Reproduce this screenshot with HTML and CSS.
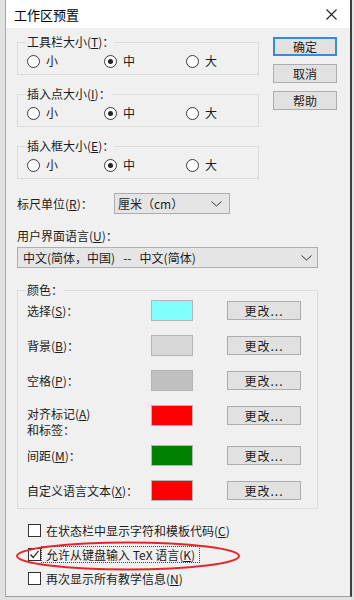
FILE: index.html
```html
<!DOCTYPE html>
<html lang="zh-CN">
<head>
  <meta charset="UTF-8">
  <meta name="viewport" content="width=device-width, initial-scale=1.0">
  <title>工作区预置</title>
  <link rel="stylesheet" href="styles.css">
</head>
<body>
  <div class="desk">
    <div class="dialog">
      <div class="titlebar">
        <span class="title">工作区预置</span>
        <svg class="close" width="11" height="11" viewBox="0 0 11 11">
          <path d="M0.5 0.5 L10.5 10.5 M10.5 0.5 L0.5 10.5" stroke="#222" stroke-width="1.1" fill="none"/>
        </svg>
      </div>

      <div class="content">
        <div class="top">
          <div class="groups">
            <fieldset class="group">
              <legend>工具栏大小(<u>T</u>)：</legend>
              <div class="radios">
                <label class="radio"><span class="dot"></span>小</label>
                <label class="radio"><span class="dot on"></span>中</label>
                <label class="radio"><span class="dot"></span>大</label>
              </div>
            </fieldset>
            <fieldset class="group">
              <legend>插入点大小(<u>I</u>)：</legend>
              <div class="radios">
                <label class="radio"><span class="dot"></span>小</label>
                <label class="radio"><span class="dot on"></span>中</label>
                <label class="radio"><span class="dot"></span>大</label>
              </div>
            </fieldset>
            <fieldset class="group">
              <legend>插入框大小(<u>E</u>)：</legend>
              <div class="radios">
                <label class="radio"><span class="dot"></span>小</label>
                <label class="radio"><span class="dot on"></span>中</label>
                <label class="radio"><span class="dot"></span>大</label>
              </div>
            </fieldset>
          </div>
          <div class="buttons">
            <div class="btn default">确定</div>
            <div class="btn">取消</div>
            <div class="btn">帮助</div>
          </div>
        </div>

        <div class="unit-row">
          <span class="unit-label">标尺单位(<u>R</u>)：</span>
          <div class="combo">
            <span>厘米（cm）</span>
            <svg width="11" height="6" viewBox="0 0 11 6"><path d="M0.5 0.5 L5.5 5 L10.5 0.5" stroke="#333" fill="none"/></svg>
          </div>
        </div>

        <div class="field-label">用户界面语言(<u>U</u>)：</div>
        <div class="combo wide">
          <span class="pre">中文(简体，中国)   --   中文(简体)</span>
          <svg width="11" height="6" viewBox="0 0 11 6"><path d="M0.5 0.5 L5.5 5 L10.5 0.5" stroke="#333" fill="none"/></svg>
        </div>

        <fieldset class="colors">
          <legend>颜色：</legend>
          <div class="color-rows">
            <div class="color-row">
              <span class="color-label">选择(<u>S</u>)：</span>
              <span class="swatch cyan"></span>
              <div class="btn change">更改...</div>
            </div>
            <div class="color-row">
              <span class="color-label">背景(<u>B</u>)：</span>
              <span class="swatch light"></span>
              <div class="btn change">更改...</div>
            </div>
            <div class="color-row">
              <span class="color-label">空格(<u>P</u>)：</span>
              <span class="swatch grey"></span>
              <div class="btn change">更改...</div>
            </div>
            <div class="color-row tall">
              <span class="color-label two-line">对齐标记(<u>A</u>)<br>和标签：</span>
              <span class="swatch red"></span>
              <div class="btn change">更改...</div>
            </div>
            <div class="color-row">
              <span class="color-label">间距(<u>M</u>)：</span>
              <span class="swatch green"></span>
              <div class="btn change">更改...</div>
            </div>
            <div class="color-row">
              <span class="color-label">自定义语言文本(<u>X</u>)：</span>
              <span class="swatch red"></span>
              <div class="btn change">更改...</div>
            </div>
          </div>
        </fieldset>

        <div class="checks">
          <div class="check-row">
            <span class="box"></span>
            <span class="check-text">在状态栏中显示字符和模板代码(<u>C</u>)</span>
          </div>
          <div class="check-row">
            <span class="box">
              <svg width="11" height="11" viewBox="0 0 11 11"><path d="M1.5 5.5 L4.2 8.5 L9.5 1.8" stroke="#222" stroke-width="1.2" fill="none"/></svg>
            </span>
            <span class="check-text focused">允许从键盘输入 TeX 语言(<u>K</u>)</span>
          </div>
          <div class="check-row">
            <span class="box"></span>
            <span class="check-text">再次显示所有教学信息(<u>N</u>)</span>
          </div>
        </div>
      </div>

      <!-- hand-drawn annotation -->
      <svg class="mark" width="228" height="32" viewBox="0 0 228 32">
        <ellipse cx="114" cy="16" rx="111" ry="13.5" stroke="#e3262b" stroke-width="2" fill="none"/>
      </svg>
    </div>
  </div>
</body>
</html>
```

FILE: styles.css
```css
body {
  margin: 0;
  background: #e2e2e2;
  font-family: 'Noto Sans CJK SC', 'Noto Sans', sans-serif;
  font-size: 12px;
  color: #1c1c1c;
}
.desk {
  height: 600px;
  display: flex;
}
.dialog {
  position: relative;
  margin-left: 5px;
  width: 344px;
  height: 596px;
  border-left: 1px solid #a8a8a8;
  border-right: 2px solid #3e3e3e;
  border-bottom: 1px solid #9c9c9c;
  background: #f0f0f0;
  display: flex;
  flex-direction: column;
}
.titlebar {
  height: 28px;
  flex-shrink: 0;
  background: #fff;
  display: flex;
  align-items: center;
  justify-content: space-between;
  padding: 0 13px 0 8px;
}
.title {
  font-size: 13px;
  color: #000;
}
.content {
  padding: 7px 13px 0 11px;
  display: flex;
  flex-direction: column;
}
.top {
  display: flex;
  gap: 14px;
}
.groups {
  width: 242px;
  display: flex;
  flex-direction: column;
  gap: 12px;
}
fieldset {
  margin: 0;
  min-width: 0;
  border: 1px solid #dcdcdc;
}
legend {
  margin-left: -1px;
  padding: 0 1px;
  line-height: 14px;
}
.group {
  padding: 5px 0 6px 9px;
}
.radios {
  display: grid;
  grid-template-columns: 77px 82px auto;
  height: 14px;
  align-items: center;
}
.radio {
  display: flex;
  align-items: center;
  gap: 6px;
  line-height: 14px;
}
.dot {
  width: 13px;
  height: 13px;
  box-sizing: border-box;
  border: 1px solid #3a3a3a;
  border-radius: 50%;
  background: #fff;
  display: flex;
  align-items: center;
  justify-content: center;
}
.dot.on::after {
  content: "";
  width: 5px;
  height: 5px;
  border-radius: 50%;
  background: #222;
}
.buttons {
  width: 64px;
  padding-top: 2px;
  display: flex;
  flex-direction: column;
  gap: 8px;
}
.btn {
  height: 19px;
  box-sizing: border-box;
  border: 1px solid #adadad;
  background: #e1e1e1;
  display: flex;
  align-items: center;
  justify-content: center;
  line-height: 1;
}
.btn.default {
  border: 2px solid #3a8ad8;
}
.unit-row {
  display: flex;
  align-items: center;
  margin-top: 14px;
}
.unit-label {
  width: 97px;
}
.combo {
  width: 116px;
  height: 21px;
  box-sizing: border-box;
  border: 1px solid #adadad;
  background: #e5e5e5;
  display: flex;
  align-items: center;
  justify-content: space-between;
  padding: 0 7px 0 3px;
}
.combo.wide {
  width: 301px;
  margin-top: 4px;
  padding: 0 5px 0 5px;
}
.pre {
  white-space: pre;
}
.field-label {
  margin-top: 15px;
  line-height: 14px;
}
.colors {
  width: 301px;
  box-sizing: border-box;
  margin-top: 15px;
  padding: 3px 0 7px 9px;
}
.color-rows {
  display: flex;
  flex-direction: column;
  gap: 14px;
}
.color-row {
  display: grid;
  grid-template-columns: 124px 76px 74px;
  align-items: start;
  height: 21px;
}
.color-row.tall {
  height: 26px;
}
.color-label {
  margin-top: 4px;
  line-height: 13px;
  white-space: nowrap;
}
.color-label.two-line {
  margin-top: 1px;
  line-height: 16px;
}
.swatch {
  width: 42px;
  height: 21px;
  box-sizing: border-box;
  border: 1px solid #b4b4b4;
}
.cyan { background: #80ffff; }
.light { background: #d8d8d8; }
.grey { background: #c0c0c0; }
.red { background: #ff0000; }
.green { background: #008000; }
.btn.change {
  margin-top: 1px;
  letter-spacing: 1px;
}
.checks {
  margin-top: 15px;
  padding-left: 11px;
  display: flex;
  flex-direction: column;
  gap: 11px;
}
.check-row {
  display: flex;
  align-items: center;
  gap: 2px;
  height: 13px;
}
.box {
  width: 13px;
  height: 13px;
  box-sizing: border-box;
  border: 1px solid #333;
  background: #fff;
  display: flex;
  align-items: center;
  justify-content: center;
}
.check-text {
  padding: 0 3px;
  line-height: 13px;
}
.check-text.focused {
  outline: 1px dotted #444;
  outline-offset: 1px;
}
.mark {
  position: absolute;
  left: 8px;
  top: 540px;
}
```
